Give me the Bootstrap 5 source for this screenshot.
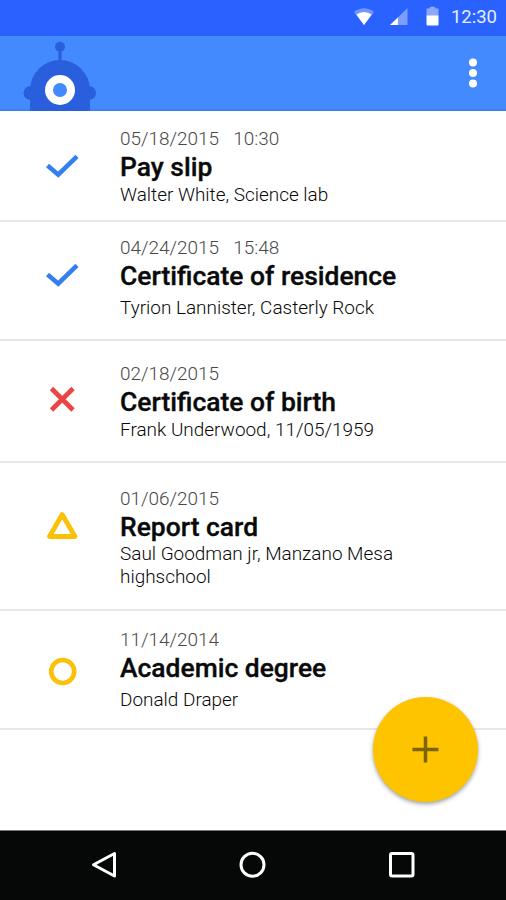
<!DOCTYPE html>
<html lang="en">
<head>
<meta charset="utf-8">
<meta name="viewport" content="width=device-width, initial-scale=1">
<title>Certificates</title>
<link href="https://cdn.jsdelivr.net/npm/bootstrap@5.3.0/dist/css/bootstrap.min.css" rel="stylesheet">
<style>
body{font-family:Roboto,sans-serif;background:#fff}
svg{display:block;flex:none}
.screen{height:900px;max-width:506px;overflow:hidden}
.status-bar{height:36px;background:#2962ff;color:#e6ecff;font-size:18.5px;line-height:35px;padding-right:9px}
.app-bar{height:75px;background:#448aff;border-bottom:2px solid #3f80ec;padding-right:21px}
.robot{margin-left:22px}
.entry{border-bottom:2px solid #e8e8e8}
.entry-icon{width:120px;padding-left:42px}
.entry-date,.entry-sub{font-weight:300;font-size:18.95px}
.entry-date{line-height:24px;color:#484848;word-spacing:9.5px}
.entry-name{font-weight:500;font-size:26.45px;line-height:32px;color:#0a0a0a;-webkit-text-stroke:.35px #0a0a0a}
.entry-sub{line-height:22.6px;color:#080808;max-width:300px}
.e1{height:111px;padding-top:16px}.e2{height:119px;padding-top:14px}.e3{height:122px;padding-top:21px}.e4{height:148px;padding-top:24px}.e5{height:119px;padding-top:17px}
.e1 svg{margin-top:19px}.e2 svg{margin-top:19px}.e3 svg{margin-top:17px}.e4 svg{margin-top:18px}.e5 svg{margin-top:24px}
.sub-drop{padding-top:1px}.sub-gap{padding-top:5px}
.fab{width:105px;height:105px;background:#ffc400;box-shadow:0 2px 4px rgba(0,0,0,.38)}
.fab-holder{padding:0 28px 98px 0}
.nav-keys{height:70px;background:#050807;border-top:1px solid #777}
</style>
</head>
<body>
<div class="screen d-flex flex-column position-relative">
  <div class="status-bar d-flex align-items-start justify-content-end">
    <svg width="97" height="36" viewBox="0 0 97 36">
      <path d="M0 12Q10 4.500 20 12L10 25Z" fill="#7295ff"/>
      <path d="M2.300 14.500Q10 9.500 17.700 14.500L10 25Z" fill="#fff"/>
      <path d="M53.500 8V25H36Z" fill="#7d9dff"/>
      <path d="M44 17.500V25H36Z" fill="#fff"/>
      <path d="M72.500 8.500H75Q75.500 6.500 78.500 6.500T82 8.500H84.500V16H72.500Z" fill="#8ba7ff"/>
      <path d="M72.500 15.500H84.500V24.500Q84.500 25.500 83.500 25.500H73.500Q72.500 25.500 72.500 24.500Z" fill="#fff"/>
    </svg>
    <span>12:30</span>
  </div>
  <header class="app-bar d-flex justify-content-between">
    <svg class="robot" width="76" height="75" viewBox="22 36 76 75">
      <g fill="#295fdc"><circle cx="60" cy="46.800" r="5"/><path d="M58.400 48H61.600V62H58.400Z"/><circle cx="30.500" cy="93" r="7"/><circle cx="89" cy="93" r="7"/><path d="M30 111V90A30 30 0 0 1 90 90V111Z"/></g>
      <circle cx="60" cy="90" r="11" fill="#448aff" stroke="#fff" stroke-width="8"/>
    </svg>
    <svg width="24" height="72" viewBox="0 0 24 72" fill="#fff"><circle cx="12" cy="26.400" r="4"/><circle cx="12" cy="36.900" r="4"/><circle cx="12" cy="47.400" r="4"/></svg>
  </header>
  <main class="flex-grow-1">
    <article class="entry e1 d-flex">
      <div class="entry-icon"><svg width="40" height="40" viewBox="0 0 40 40" fill="none" stroke="#347ff0" stroke-width="4.600"><path d="M5.500 19.500L16.200 28.700L35 10.300"/></svg></div>
      <div><div class="entry-date">05/18/2015 10:30</div><div class="entry-name">Pay slip</div><div class="entry-sub sub-drop">Walter White, Science lab</div></div>
    </article>
    <article class="entry e2 d-flex">
      <div class="entry-icon"><svg width="40" height="40" viewBox="0 0 40 40" fill="none" stroke="#347ff0" stroke-width="4.600"><path d="M5.500 19.500L16.200 28.700L35 10.300"/></svg></div>
      <div><div class="entry-date">04/24/2015 15:48</div><div class="entry-name">Certificate of residence</div><div class="entry-sub sub-gap">Tyrion Lannister, Casterly Rock</div></div>
    </article>
    <article class="entry e3 d-flex">
      <div class="entry-icon"><svg width="40" height="40" viewBox="0 0 40 40" fill="none" stroke="#ec4444" stroke-width="4.600"><path d="M9.500 9.500L31 31M31 9.500L9.500 31"/></svg></div>
      <div><div class="entry-date">02/18/2015</div><div class="entry-name">Certificate of birth</div><div class="entry-sub sub-drop">Frank Underwood, 11/05/1959</div></div>
    </article>
    <article class="entry e4 d-flex">
      <div class="entry-icon"><svg width="40" height="40" viewBox="0 0 40 40" fill="none" stroke="#fbc008" stroke-width="4.800" stroke-linejoin="round"><path d="M20.200 9.500L33 31.500H7.500Z"/></svg></div>
      <div><div class="entry-date">01/06/2015</div><div class="entry-name">Report card</div><div class="entry-sub">Saul Goodman jr, Manzano Mesa highschool</div></div>
    </article>
    <article class="entry e5 d-flex">
      <div class="entry-icon"><svg width="40" height="40" viewBox="0 0 40 40" fill="none" stroke="#fbc008" stroke-width="4.600"><circle cx="20.700" cy="19.500" r="11.500"/></svg></div>
      <div><div class="entry-date">11/14/2014</div><div class="entry-name">Academic degree</div><div class="entry-sub sub-gap">Donald Draper</div></div>
    </article>
  </main>
  <nav class="nav-keys d-flex justify-content-center flex-shrink-0">
    <svg width="330" height="69" viewBox="0 0 330 69" fill="none" stroke="#fff" stroke-width="3" stroke-linejoin="round"><path d="M26.500 22.500V45L5.500 33.700Z"/><circle cx="164.500" cy="33.700" r="11.500"/><rect x="302.500" y="22.500" width="22.500" height="22.500" rx="1.500"/></svg>
  </nav>
  <div class="fab-holder position-absolute bottom-0 end-0">
    <button type="button" class="fab btn rounded-circle border-0 p-0 d-flex align-items-center justify-content-center" aria-label="Add"><svg width="27" height="27" viewBox="0 0 27 27" stroke="#7a6406" stroke-width="3.500"><path d="M13.500 .5V26.500M.5 13.500H26.500"/></svg></button>
  </div>
</div>
<script src="https://cdn.jsdelivr.net/npm/bootstrap@5.3.0/dist/js/bootstrap.bundle.min.js"></script>
</body>
</html>
